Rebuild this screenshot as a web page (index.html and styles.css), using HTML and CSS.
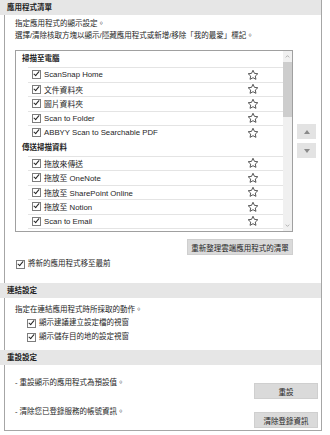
FILE: index.html
```html
<!DOCTYPE html>
<html lang="zh-Hant">
<head>
    <meta charset="UTF-8">
    <meta name="viewport" content="width=device-width, initial-scale=1.0">
    <title>應用程式清單</title>
    <link rel="stylesheet" href="styles.css">
</head>
<body>
    <div class="panel">
        <!-- 應用程式清單 -->
        <div class="band">應用程式清單</div>
        <p class="desc first">指定應用程式的顯示設定。</p>
        <p class="desc">選擇/清除核取方塊以顯示/隱藏應用程式或新增/移除「我的最愛」標記。</p>

        <div class="list-area">
            <div class="listbox">
                <div class="list-inner">
                    <div class="group">掃描至電腦</div>
                    <div class="row"><span class="cb"></span><span class="name">ScanSnap Home</span><svg class="star" viewBox="0 0 24 24"><path d="M12 2.5l2.9 6.2 6.7.8-5 4.6 1.3 6.6L12 17.4l-5.9 3.3 1.3-6.6-5-4.6 6.7-.8z"/></svg></div>
                    <div class="row"><span class="cb"></span><span class="name">文件資料夾</span><svg class="star" viewBox="0 0 24 24"><path d="M12 2.5l2.9 6.2 6.7.8-5 4.6 1.3 6.6L12 17.4l-5.9 3.3 1.3-6.6-5-4.6 6.7-.8z"/></svg></div>
                    <div class="row"><span class="cb"></span><span class="name">圖片資料夾</span><svg class="star" viewBox="0 0 24 24"><path d="M12 2.5l2.9 6.2 6.7.8-5 4.6 1.3 6.6L12 17.4l-5.9 3.3 1.3-6.6-5-4.6 6.7-.8z"/></svg></div>
                    <div class="row"><span class="cb"></span><span class="name">Scan to Folder</span><svg class="star" viewBox="0 0 24 24"><path d="M12 2.5l2.9 6.2 6.7.8-5 4.6 1.3 6.6L12 17.4l-5.9 3.3 1.3-6.6-5-4.6 6.7-.8z"/></svg></div>
                    <div class="row"><span class="cb"></span><span class="name">ABBYY Scan to Searchable PDF</span><svg class="star" viewBox="0 0 24 24"><path d="M12 2.5l2.9 6.2 6.7.8-5 4.6 1.3 6.6L12 17.4l-5.9 3.3 1.3-6.6-5-4.6 6.7-.8z"/></svg></div>
                    <div class="group">傳送掃描資料</div>
                    <div class="row"><span class="cb"></span><span class="name">拖放來傳送</span><svg class="star" viewBox="0 0 24 24"><path d="M12 2.5l2.9 6.2 6.7.8-5 4.6 1.3 6.6L12 17.4l-5.9 3.3 1.3-6.6-5-4.6 6.7-.8z"/></svg></div>
                    <div class="row"><span class="cb"></span><span class="name">拖放至 OneNote</span><svg class="star" viewBox="0 0 24 24"><path d="M12 2.5l2.9 6.2 6.7.8-5 4.6 1.3 6.6L12 17.4l-5.9 3.3 1.3-6.6-5-4.6 6.7-.8z"/></svg></div>
                    <div class="row"><span class="cb"></span><span class="name">拖放至 SharePoint Online</span><svg class="star" viewBox="0 0 24 24"><path d="M12 2.5l2.9 6.2 6.7.8-5 4.6 1.3 6.6L12 17.4l-5.9 3.3 1.3-6.6-5-4.6 6.7-.8z"/></svg></div>
                    <div class="row"><span class="cb"></span><span class="name">拖放至 Notion</span><svg class="star" viewBox="0 0 24 24"><path d="M12 2.5l2.9 6.2 6.7.8-5 4.6 1.3 6.6L12 17.4l-5.9 3.3 1.3-6.6-5-4.6 6.7-.8z"/></svg></div>
                    <div class="row"><span class="cb"></span><span class="name">Scan to Email</span><svg class="star" viewBox="0 0 24 24"><path d="M12 2.5l2.9 6.2 6.7.8-5 4.6 1.3 6.6L12 17.4l-5.9 3.3 1.3-6.6-5-4.6 6.7-.8z"/></svg></div>
                    <div class="row"><span class="cb"></span><span class="name">Scan to Print</span><svg class="star" viewBox="0 0 24 24"><path d="M12 2.5l2.9 6.2 6.7.8-5 4.6 1.3 6.6L12 17.4l-5.9 3.3 1.3-6.6-5-4.6 6.7-.8z"/></svg></div>
                </div>
                <div class="scrollbar">
                    <div class="sb-arrow"><svg viewBox="0 0 8 8"><polyline points="2,5 4,3 6,5"/></svg></div>
                    <div class="sb-track"><div class="sb-thumb"></div></div>
                    <div class="sb-arrow"><svg viewBox="0 0 8 8"><polyline points="2,3 4,5 6,3"/></svg></div>
                </div>
            </div>
            <div class="move-btns">
                <button class="move"><span class="tri up"></span></button>
                <button class="move"><span class="tri down"></span></button>
            </div>
        </div>

        <div class="refresh-row">
            <button class="btn">重新整理雲端應用程式的清單</button>
        </div>
        <label class="check top-check"><span class="cb"></span>將新的應用程式移至最前</label>

        <!-- 連結設定 -->
        <div class="band link-band">連結設定</div>
        <p class="desc second">指定在連結應用程式時所採取的動作。</p>
        <label class="check sub-check"><span class="cb"></span>顯示建議建立設定檔的視窗</label>
        <label class="check sub-check"><span class="cb"></span>顯示儲存目的地的設定視窗</label>

        <!-- 重設設定 -->
        <div class="band reset-band">重設設定</div>
        <div class="reset-row first-reset">
            <span>- 重設顯示的應用程式為預設值。</span>
            <button class="btn small">重設</button>
        </div>
        <div class="reset-row">
            <span>- 清除您已登錄服務的帳號資訊。</span>
            <button class="btn small">清除登錄資訊</button>
        </div>
    </div>
</body>
</html>
```

FILE: styles.css
```css
body {
    margin: 0;
    padding: 0;
    background-color: #fff;
    font-family: "Liberation Sans", "Noto Sans CJK TC", sans-serif;
    font-size: 7.5px;
    color: #1e1e1e;
}
.panel {
    margin-left: 4px;
    width: 316px;
    height: 430px;
    border: 1px solid #a6a6a6;
    border-top: none;
}
.band {
    margin-left: -5px;
    height: 15px;
    line-height: 15px;
    padding-left: 7px;
    background-color: #e6e6e6;
    font-weight: bold;
}
.desc {
    margin: 0;
    padding-left: 10px;
    line-height: 12px;
}
.desc.first {
    margin-top: 3px;
}
.desc.second {
    margin-top: 6px;
}
.list-area {
    display: flex;
    align-items: center;
    gap: 4px;
    margin-top: 8px;
    margin-left: 10px;
}
.listbox {
    display: flex;
    width: 276px;
    height: 180px;
    border: 1px solid #a0a0a0;
    overflow: hidden;
}
.list-inner {
    flex-grow: 1;
    overflow: hidden;
}
.group {
    height: 16px;
    line-height: 16px;
    padding-left: 6px;
    font-weight: bold;
}
.row {
    display: flex;
    align-items: center;
    margin-left: 12px;
    height: 13.5px;
    border-top: 1px solid #e4e4e4;
}
.row .cb {
    margin-left: 4px;
}
.row .name {
    margin-left: 3px;
    font-size: 7.8px;
}
.star {
    width: 12px;
    height: 12px;
    margin-left: auto;
    margin-right: 24px;
    fill: none;
    stroke: #444;
    stroke-width: 1.8;
    stroke-linejoin: round;
}
.cb {
    position: relative;
    display: inline-block;
    width: 7px;
    height: 7px;
    border: 1px solid #7d7d7d;
    background-color: #fff;
    flex-shrink: 0;
}
.cb::after {
    content: "";
    position: absolute;
    left: 2px;
    top: -1px;
    width: 2px;
    height: 5px;
    border: solid #262626;
    border-width: 0 1.4px 1.4px 0;
    transform: rotate(40deg);
}
.scrollbar {
    display: flex;
    flex-direction: column;
    width: 9px;
    background-color: #f0f0f0;
}
.sb-arrow {
    height: 11px;
    display: flex;
    align-items: center;
    justify-content: center;
}
.sb-arrow svg {
    width: 7px;
    height: 7px;
    fill: none;
    stroke: #a8a8a8;
    stroke-width: 1;
}
.sb-track {
    flex-grow: 1;
}
.sb-thumb {
    height: 55px;
    background-color: #cdcdcd;
}
.move-btns {
    display: flex;
    flex-direction: column;
    gap: 4px;
}
.move {
    width: 19px;
    height: 15px;
    padding: 0;
    border: none;
    background-color: #e3e3e3;
    display: flex;
    align-items: center;
    justify-content: center;
}
.tri {
    width: 0;
    height: 0;
    border-left: 3px solid transparent;
    border-right: 3px solid transparent;
}
.tri.up {
    border-bottom: 4px solid #8a8a8a;
}
.tri.down {
    border-top: 4px solid #8a8a8a;
}
.refresh-row {
    display: flex;
    justify-content: flex-end;
    width: 278px;
    margin-left: 10px;
    margin-top: 7px;
}
.btn {
    height: 16px;
    padding: 0;
    border: 1px solid #cfcfcf;
    background-color: #dadada;
    font-family: "Liberation Sans", "Noto Sans CJK TC", sans-serif;
    font-size: 7.5px;
    color: #1e1e1e;
    white-space: nowrap;
}
.refresh-row .btn {
    width: 106px;
}
.check {
    display: flex;
    align-items: center;
    line-height: 14px;
}
.check .cb {
    margin-right: 3px;
}
.top-check {
    margin-top: 2px;
    padding-left: 11px;
}
.link-band {
    margin-top: 12px;
}
.sub-check {
    padding-left: 22px;
}
.reset-band {
    margin-top: 6px;
}
.reset-row {
    display: flex;
    justify-content: space-between;
    align-items: flex-start;
    padding-left: 10px;
    padding-right: 3px;
    line-height: 12px;
    margin-top: 7px;
}
.reset-row.first-reset {
    margin-top: 12px;
}
.reset-row .btn {
    width: 64px;
    margin-top: 6px;
}
```
